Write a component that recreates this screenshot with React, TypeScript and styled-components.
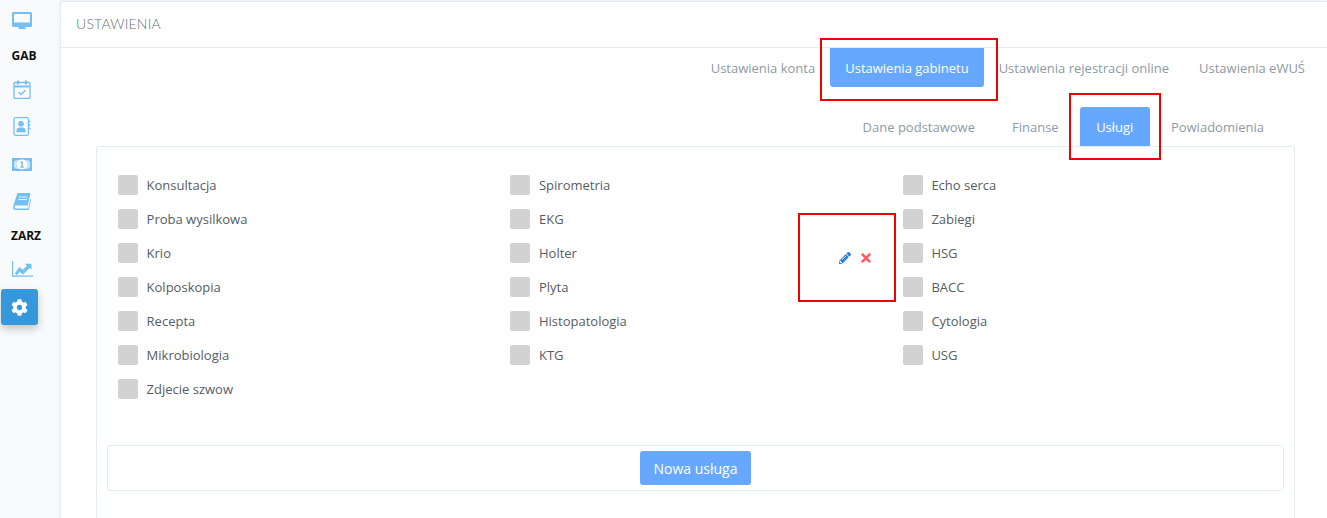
import React from "react";
import styled, { createGlobalStyle } from "styled-components";
import { FaCog, FaPencilAlt, FaTimes } from "react-icons/fa";

const Global = createGlobalStyle`
  html, body { margin: 0; padding: 0; height: 100%; background: #f9fafc; overflow: hidden; }
  body { font-family: "Open Sans", "Liberation Sans", sans-serif; }
  * { box-sizing: border-box; }
`;

const Page = styled.div`
  position: relative;
  display: flex;
  width: 1327px;
  height: 518px;
  overflow: hidden;
  background: #f9fafc;
`;

const Sidebar = styled.nav`
  width: 60px;
  flex: none;
  display: flex;
  flex-direction: column;
  align-items: flex-start;
  padding: 2px 0 0 1px;
`;

const NavIcon = styled.div<{ $h: number }>`
  width: 42px;
  height: ${(p) => p.$h}px;
  display: flex;
  align-items: center;
  justify-content: center;
  color: #74c0f3;
  flex: none;
`;

const NavLabel = styled.div<{ $h: number; $w: number }>`
  width: ${(p) => p.$w}px;
  height: ${(p) => p.$h}px;
  display: flex;
  align-items: center;
  justify-content: center;
  font-size: 12px;
  font-weight: 700;
  color: #111;
  flex: none;
`;

const ActiveNav = styled.div`
  width: 37px;
  height: 36px;
  margin-top: 2px;
  display: flex;
  align-items: center;
  justify-content: center;
  background: #3498db;
  border-radius: 3px;
  color: #fff;
  box-shadow: 0 4px 8px rgba(0, 0, 0, 0.22);
  flex: none;
`;

const Card = styled.main`
  flex: 1;
  margin-top: 1px;
  background: #fff;
  border: 1px solid #e3ebf3;
  border-right: 0;
  border-bottom: 0;
  border-radius: 3px 0 0 0;
  box-shadow: 0 0 6px rgba(180, 190, 210, 0.18);
  display: flex;
  flex-direction: column;
  min-width: 0;
`;

const CardHeader = styled.header`
  height: 46px;
  flex: none;
  border-bottom: 1px solid #e3ebf3;
  display: flex;
  align-items: center;
  padding: 0 0 2px 15px;
  font-family: "Lato", "Open Sans", sans-serif;
  font-weight: 300;
  font-size: 14px;
  color: #6b6f76;
  letter-spacing: 0.2px;
`;

const TabRow = styled.div<{ $top: number; $right: number; $gap: number }>`
  display: flex;
  justify-content: flex-end;
  align-items: stretch;
  margin-top: ${(p) => p.$top}px;
  padding-right: ${(p) => p.$right}px;
  gap: ${(p) => p.$gap}px;
  height: 39px;
  flex: none;
`;

const Tab = styled.div<{ $active?: boolean; $pad: number; $bottom?: boolean }>`
  display: flex;
  align-items: center;
  justify-content: center;
  padding: 0 ${(p) => p.$pad}px;
  font-size: 13px;
  color: ${(p) => (p.$active ? "#fff" : "#8e9aa6")};
  font-weight: ${(p) => (p.$active ? 500 : 400)};
  background: ${(p) => (p.$active ? "#66a8ff" : "transparent")};
  border-radius: ${(p) => (p.$bottom ? "0 0 3px 3px" : "3px 3px 0 0")};
  white-space: nowrap;
`;

const Panel = styled.section`
  margin: 0 32px 0 35px;
  flex: 1;
  border: 1px solid #e3ebf3;
  border-bottom: 0;
  border-radius: 3px 3px 0 0;
  padding: 28px 10px 0;
  display: flex;
  flex-direction: column;
`;

const Grid = styled.div`
  display: grid;
  grid-template-columns: 392.4px 392.4px 1fr;
  grid-auto-rows: 34px;
  padding-left: 11px;
  height: 270px;
  flex: none;
`;

const Service = styled.label`
  display: flex;
  align-items: flex-start;
  gap: 8.6px;
  font-size: 13px;
  color: #565c66;
  line-height: 20px;
`;

const Box = styled.span`
  width: 20px;
  height: 20px;
  background: #d2d2d2;
  border-radius: 2px;
  flex: none;
`;

const Footer = styled.div`
  height: 46px;
  border: 1px solid #e3ebf3;
  border-radius: 3px;
  display: flex;
  align-items: center;
  justify-content: center;
  flex: none;
`;

const PrimaryButton = styled.button`
  width: 111px;
  height: 34px;
  border: 0;
  border-radius: 3px;
  background: #66a8ff;
  color: #fff;
  font-family: inherit;
  font-size: 14px;
  font-weight: 500;
  padding: 0;
`;

const Actions = styled.div`
  position: absolute;
  left: 839px;
  top: 251px;
  display: flex;
  align-items: center;
  gap: 8px;
`;

const Edit = styled.span`
  color: #2a7ad6;
  display: flex;
`;

const Remove = styled.span`
  color: #ff5a5f;
  display: flex;
`;

const Marker = styled.div<{ $x: number; $y: number; $w: number; $h: number }>`
  position: absolute;
  left: ${(p) => p.$x}px;
  top: ${(p) => p.$y}px;
  width: ${(p) => p.$w}px;
  height: ${(p) => p.$h}px;
  border: 2px solid #f00000;
  pointer-events: none;
`;

const DesktopIcon = () => (
  <svg width="20" height="17" viewBox="0 0 20 17">
    <path fill="currentColor" fillRule="evenodd" d="M1.5 0h17A1.5 1.5 0 0 1 20 1.5v12a1.5 1.5 0 0 1-1.5 1.5H13l.4 1.2H14v.8H6v-.8h.6L7 15H1.5A1.5 1.5 0 0 1 0 13.500v-12A1.500 1.500 0 0 1 1.500 0zM2 2v8.500h16V2z" />
  </svg>
);

const CalendarIcon = () => (
  <svg width="18" height="19" viewBox="0 0 18 19" fill="none" stroke="currentColor">
    <rect x="1" y="2.500" width="16" height="16" rx="1" strokeWidth="1.300" />
    <path d="M1 6.500h16" strokeWidth="2" />
    <path d="M5 0.500v4M13 0.500v4" strokeWidth="2.200" />
    <path d="M5.500 12l2.500 2.500 4.500-4.500" strokeWidth="1.300" />
  </svg>
);

const ContactsIcon = () => (
  <svg width="18" height="19" viewBox="0 0 18 19" fill="none" stroke="currentColor">
    <rect x="1" y="0.700" width="14.500" height="17.600" rx="1.500" strokeWidth="1.300" />
    <path d="M15.500 4.500h2M15.500 8h2M15.500 11.500h2" strokeWidth="1.300" />
    <circle cx="8" cy="6.800" r="2.800" fill="currentColor" stroke="none" />
    <path d="M3.500 15.300v-1.800c0-2 1.500-3 3-3h3c1.500 0 3 1 3 3v1.800z" fill="currentColor" stroke="none" />
  </svg>
);

const MoneyIcon = () => (
  <svg width="20" height="13" viewBox="0 0 20 13">
    <path fill="currentColor" fillRule="evenodd" d="M0 0h20v13H0zM3.500 2.200c-.2.900-.6 1.300-1.500 1.500v5.600c.9.200 1.300.600 1.500 1.500h13c.2-.9.600-1.300 1.500-1.500V3.700c-.9-.2-1.300-.6-1.500-1.500z" />
    <rect x="2" y="2.200" width="16" height="8.600" fill="currentColor" opacity="0.35" />
    <ellipse cx="10" cy="6.500" rx="5" ry="5" fill="#fff" />
    <path fill="currentColor" d="M9.400 3.200h1.500v5.400h1v1.200H8.200V8.600h1.200V4.800l-1 .4V4z" />
  </svg>
);

const BookIcon = () => (
  <svg width="18" height="17" viewBox="0 0 18 17">
    <path fill="currentColor" d="M4.500 0H17.500L14.800 12.500H3.500C2.300 12.500 1.500 13 1.500 14s.8 1.500 2 1.500h11.800l2-9.500.7.3L16 17H3C1 17 0 15.700 0 14.300c0-.5.100-1 .2-1.500z" />
    <path fill="#fff" d="M6 3.500h8.500l-.2 1H5.800zM5.500 6h8.500l-.2 1H5.300z" opacity="0.85" />
  </svg>
);

const ChartIcon = () => (
  <svg width="21" height="16" viewBox="0 0 21 16">
    <path fill="none" stroke="currentColor" strokeWidth="1.200" d="M0.600 0v15.200H21" />
    <path fill="currentColor" d="M3 12l4.500-6 3.400 2.700 4-4-1.900-1.900H19.500v6l-1.900-1.900-6.500 6.500-3.400-2.700-3 3.800z" />
  </svg>
);

const services = [
  "Konsultacja", "Spirometria", "Echo serca",
  "Proba wysilkowa", "EKG", "Zabiegi",
  "Krio", "Holter", "HSG",
  "Kolposkopia", "Plyta", "BACC",
  "Recepta", "Histopatologia", "Cytologia",
  "Mikrobiologia", "KTG", "USG",
  "Zdjecie szwow",
];

export default function App() {
  return (
    <Page>
      <Global />
      <Sidebar>
        <NavIcon $h={36}><DesktopIcon /></NavIcon>
        <NavLabel $h={34} $w={46}>GAB</NavLabel>
        <NavIcon $h={34}><CalendarIcon /></NavIcon>
        <NavIcon $h={40}><ContactsIcon /></NavIcon>
        <NavIcon $h={36}><MoneyIcon /></NavIcon>
        <NavIcon $h={38}><BookIcon /></NavIcon>
        <NavLabel $h={31} $w={50}>ZARZ</NavLabel>
        <NavIcon $h={36}><ChartIcon /></NavIcon>
        <ActiveNav><FaCog size={17} /></ActiveNav>
      </Sidebar>
      <Card>
        <CardHeader>USTAWIENIA</CardHeader>
        <TabRow $top={0} $right={7} $gap={0}>
          <Tab $pad={15}>Ustawienia konta</Tab>
          <Tab $pad={15} $active $bottom>Ustawienia gabinetu</Tab>
          <Tab $pad={15}>Ustawienia rejestracji online</Tab>
          <Tab $pad={15}>Ustawienia eWUŚ</Tab>
        </TabRow>
        <TabRow $top={20} $right={47} $gap={5}>
          <Tab $pad={16}>Dane podstawowe</Tab>
          <Tab $pad={16}>Finanse</Tab>
          <Tab $pad={16.5} $active>Usługi</Tab>
          <Tab $pad={16}>Powiadomienia</Tab>
        </TabRow>
        <Panel>
          <Grid>
            {services.map((s) => (
              <Service key={s}>
                <Box />
                {s}
              </Service>
            ))}
          </Grid>
          <Footer>
            <PrimaryButton>Nowa usługa</PrimaryButton>
          </Footer>
        </Panel>
      </Card>
      <Actions>
        <Edit><FaPencilAlt size={12} /></Edit>
        <Remove><FaTimes size={14} /></Remove>
      </Actions>
      <Marker $x={820} $y={38} $w={178} $h={63} />
      <Marker $x={1069} $y={93} $w={92} $h={67} />
      <Marker $x={798} $y={213} $w={98} $h={89} />
    </Page>
  );
}
